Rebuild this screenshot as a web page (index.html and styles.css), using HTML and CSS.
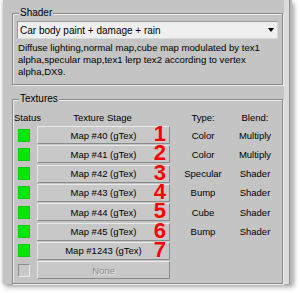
FILE: index.html
```html
<!DOCTYPE html>
<html>
<head>
<meta charset="utf-8">
<link rel="stylesheet" href="styles.css">
</head>
<body>
<div class="panel">
  <div class="content">
    <div class="group shader">
      <span class="group-title">Shader</span>
      <div class="dropdown">
        <span>Car body paint + damage + rain</span>
        <span class="arrow"></span>
      </div>
      <p class="desc">Diffuse lighting,normal map,cube map modulated by tex1 alpha,specular map,tex1 lerp tex2 according to vertex alpha,DX9.</p>
    </div>
    <div class="group textures">
      <span class="group-title">Textures</span>
      <div class="row head">
        <span class="h-status">Status</span>
        <span class="h-stage">Texture Stage</span>
        <span class="cell">Type:</span>
        <span class="cell">Blend:</span>
      </div>
      <div class="row">
        <span class="status on"></span>
        <div class="btnwrap"><span class="btn">Map #40 (gTex)</span><span class="num">1</span></div>
        <span class="cell">Color</span><span class="cell">Multiply</span>
      </div>
      <div class="row">
        <span class="status on"></span>
        <div class="btnwrap"><span class="btn">Map #41 (gTex)</span><span class="num">2</span></div>
        <span class="cell">Color</span><span class="cell">Multiply</span>
      </div>
      <div class="row">
        <span class="status on"></span>
        <div class="btnwrap"><span class="btn">Map #42 (gTex)</span><span class="num">3</span></div>
        <span class="cell">Specular</span><span class="cell">Shader</span>
      </div>
      <div class="row">
        <span class="status on"></span>
        <div class="btnwrap"><span class="btn">Map #43 (gTex)</span><span class="num">4</span></div>
        <span class="cell">Bump</span><span class="cell">Shader</span>
      </div>
      <div class="row">
        <span class="status on"></span>
        <div class="btnwrap"><span class="btn">Map #44 (gTex)</span><span class="num">5</span></div>
        <span class="cell">Cube</span><span class="cell">Shader</span>
      </div>
      <div class="row">
        <span class="status on"></span>
        <div class="btnwrap"><span class="btn">Map #45 (gTex)</span><span class="num">6</span></div>
        <span class="cell">Bump</span><span class="cell">Shader</span>
      </div>
      <div class="row">
        <span class="status on"></span>
        <div class="btnwrap"><span class="btn">Map #1243 (gTex)</span><span class="num">7</span></div>
        <span class="cell"></span><span class="cell"></span>
      </div>
      <div class="row">
        <span class="status"></span>
        <div class="btnwrap"><span class="btn disabled">None</span></div>
        <span class="cell"></span><span class="cell"></span>
      </div>
    </div>
  </div>
  <div class="strip"></div>
</div>
</body>
</html>
```

FILE: styles.css
```css
html, body {
  margin: 0;
  padding: 0;
  background: #ffffff;
}
body {
  width: 300px;
  height: 293px;
  overflow: hidden;
  font-family: "Liberation Sans", Arial, sans-serif;
  font-size: 9.5px;
  color: #000;
}
.panel {
  margin-left: 3px;
  width: 289px;
  height: 284px;
  background: #c4c4c4;
  box-shadow: 2px 3px 5px rgba(0, 0, 0, 0.35), -1px 0 3px rgba(0, 0, 0, 0.15);
  display: flex;
}
.content {
  width: 281px;
  padding: 13px 0 0 9px;
  box-sizing: border-box;
}
.strip {
  width: 8px;
  box-sizing: border-box;
  border-left: 2px solid #dcdcdc;
  border-right: 2px solid #b8b8b8;
  background: linear-gradient(to right, #dcdcdc 0 3px, #8e8e8e 3px 4px, #c4c4c4 4px);
}
.group {
  position: relative;
  width: 271px;
  box-sizing: border-box;
  border: 1px solid #8a8a8a;
  box-shadow: 1px 1px 0 #ececec, inset 1px 1px 0 #ececec;
}
.group-title {
  position: absolute;
  top: -7px;
  left: 6px;
  padding: 0 1px;
  background: #c4c4c4;
  line-height: 12px;
  font-size: 10px;
}
.shader {
  height: 72px;
  padding: 7px 4px 0 4px;
}
.dropdown {
  height: 18px;
  box-sizing: border-box;
  border: 1px solid #9a9a9a;
  border-right-color: #d8d8d8;
  border-bottom-color: #d8d8d8;
  background: #efefef;
  display: flex;
  align-items: center;
  justify-content: space-between;
  padding: 0 3px 0 2px;
  font-size: 10px;
}
.arrow {
  width: 0;
  height: 0;
  border-left: 3px solid transparent;
  border-right: 3px solid transparent;
  border-top: 4px solid #000;
}
.desc {
  margin: 3px 0 0 1px;
  line-height: 12px;
  font-size: 9.6px;
}
.textures {
  margin-top: 14px;
  height: 185px;
  padding: 11px 0 0 0;
}
.row {
  display: grid;
  grid-template-columns: 24px 133px 5px 56px 48px;
  align-items: center;
  height: 18px;
  margin-bottom: 1.33px;
}
.row .status { grid-column: 1; }
.row .btnwrap { grid-column: 2; }
.row .cell:nth-of-type(3), .row .cell:nth-last-child(2) { grid-column: 4; }
.row .cell:last-child { grid-column: 5; }
.cell {
  text-align: center;
}
.head {
  height: 12px;
  margin-bottom: 3px;
}
.h-status {
  grid-column: 1 / 3;
  padding-left: 1px;
}
.head .h-stage {
  grid-column: 2;
  text-align: center;
  padding-right: 2px;
}
.head .h-status { grid-row: 1; grid-column: 1 / 3; }
.head .h-stage { grid-row: 1; }
.status {
  width: 12px;
  height: 13px;
  margin-left: 5px;
  box-sizing: border-box;
  border: 1px solid #8a8a8a;
  border-right-color: #e8e8e8;
  border-bottom-color: #e8e8e8;
  background: #c8c8c8;
}
.status.on {
  background: #08e808;
  border-color: #10c810;
}
.btnwrap {
  position: relative;
  height: 18px;
}
.btn {
  display: flex;
  align-items: center;
  justify-content: center;
  height: 18px;
  box-sizing: border-box;
  border: 1px solid #eaeaea;
  border-right-color: #8a8a8a;
  border-bottom-color: #8a8a8a;
  background: #c8c8c8;
}
.btn.disabled {
  color: #8c8c8c;
  text-shadow: 1px 1px 0 #e8e8e8;
}
.num {
  position: absolute;
  right: 4px;
  top: -3px;
  font-family: "Liberation Sans", Arial, sans-serif;
  font-weight: bold;
  font-size: 22px;
  line-height: 22px;
  color: #ff0000;
}
```
